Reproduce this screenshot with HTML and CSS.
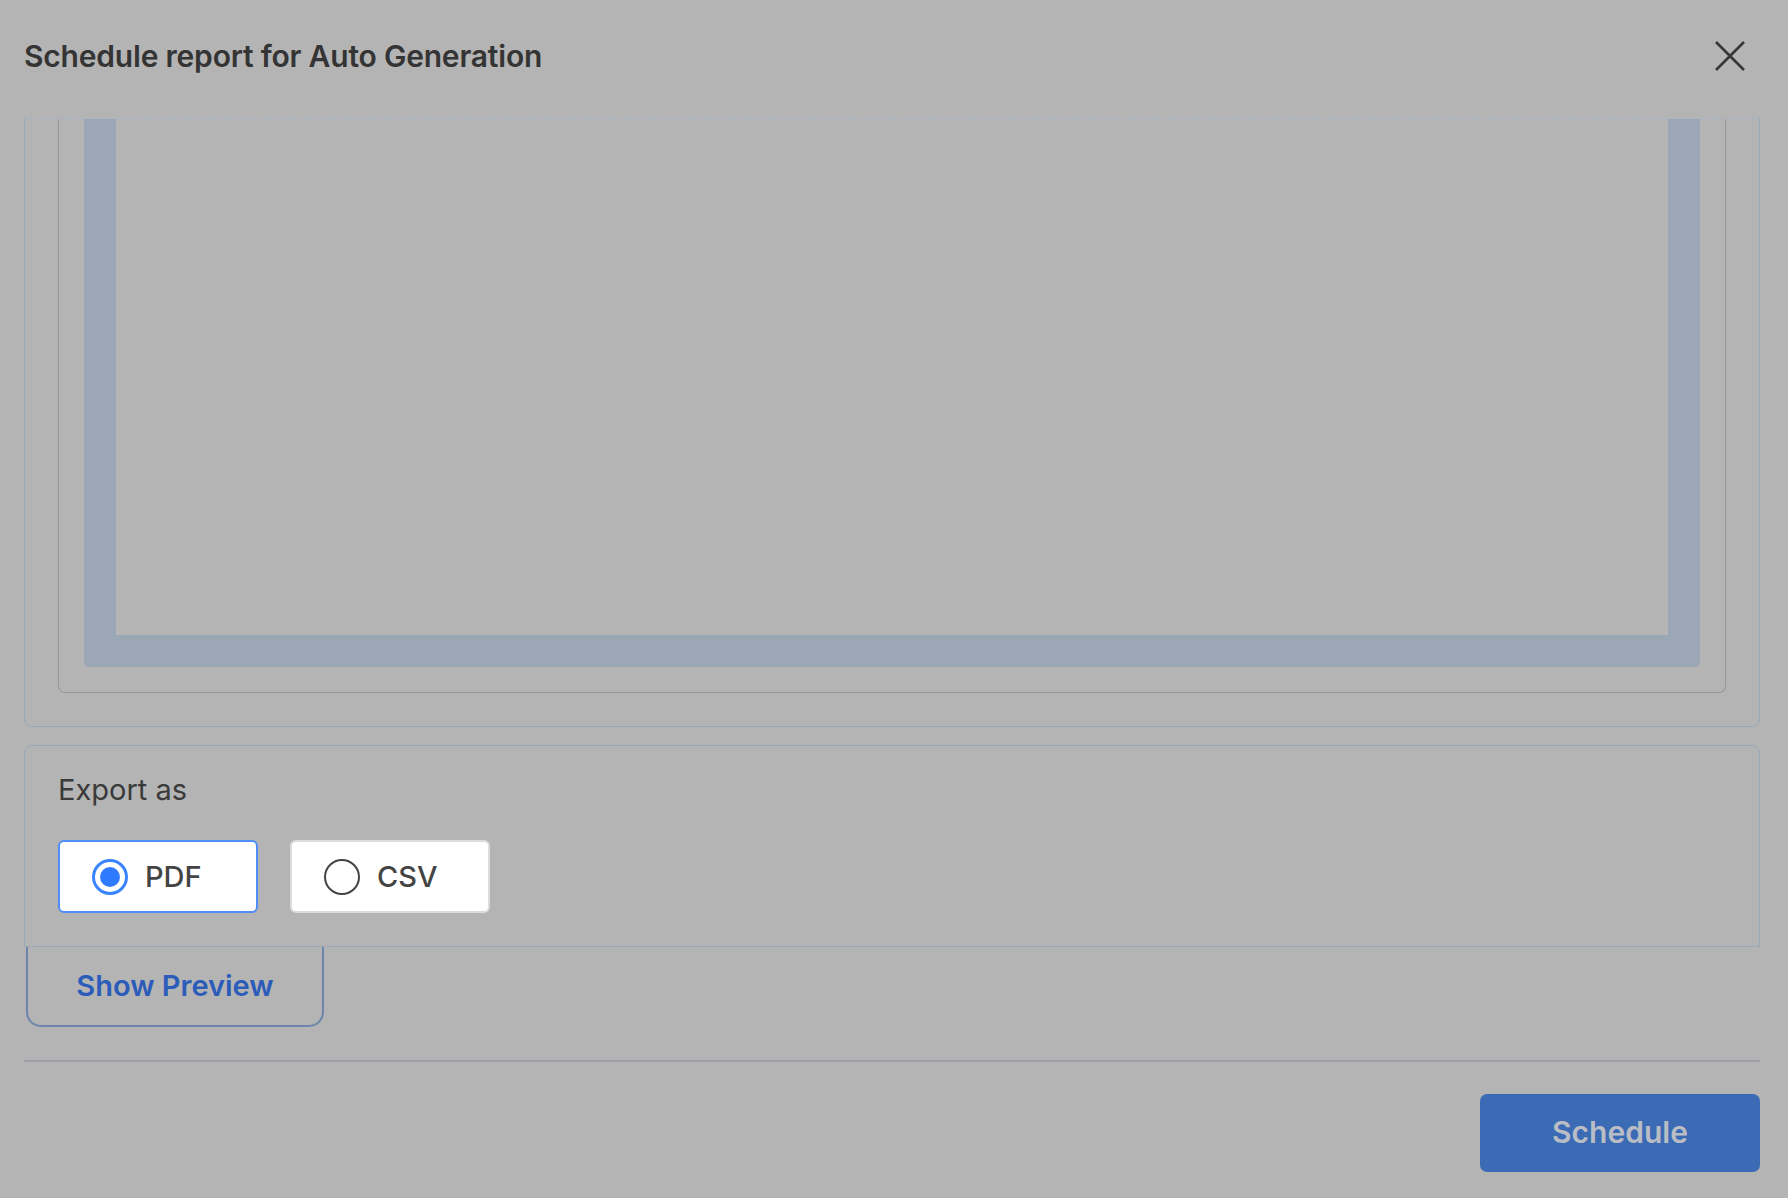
FILE: index.html
```html
<!DOCTYPE html>
<html lang="en">
  <head>
    <meta charset="UTF-8" />
    <meta name="viewport" content="width=device-width, initial-scale=1" />
    <title>Schedule report for Auto Generation</title>
    <link rel="stylesheet" href="styles.css">
  </head>
  <body>
    <div class="modal">
      <div class="modal-header">
        <h1 class="modal-title">Schedule report for Auto Generation</h1>
        <button class="close-btn" aria-label="Close">
          <svg viewBox="0 0 32 32" width="32" height="32">
            <path d="M2 2 L30 30 M30 2 L2 30" />
          </svg>
        </button>
      </div>

      <div class="preview-panel">
        <div class="preview-box">
          <div class="preview-frame"></div>
        </div>
      </div>

      <div class="export-panel">
        <div class="export-label">Export as</div>
        <div class="export-options">
          <label class="option selected">
            <span class="radio"></span>
            <span class="option-text">PDF</span>
          </label>
          <label class="option">
            <span class="radio"></span>
            <span class="option-text">CSV</span>
          </label>
        </div>
      </div>

      <button class="preview-btn">Show Preview</button>

      <div class="modal-footer">
        <button class="schedule-btn">Schedule</button>
      </div>
    </div>
  </body>
</html>
```

FILE: styles.css
```css
body {
  margin: 0;
  background: #b4b4b4;
  font-family: Inter, "Noto Sans", sans-serif;
  color: #333;
}
.modal {
  padding: 0 28px 0 24px;
}
.modal-header {
  height: 118px;
  box-sizing: border-box;
  padding-bottom: 7px;
  display: flex;
  align-items: center;
  justify-content: space-between;
}
.modal-title {
  margin: 0;
  font-size: 30px;
  font-weight: 600;
  color: #343434;
  letter-spacing: -0.2px;
}
.close-btn {
  background: none;
  border: none;
  padding: 0;
  margin-right: 14px;
  width: 32px;
  height: 32px;
  cursor: pointer;
}
.close-btn path {
  stroke: #363636;
  stroke-width: 2.6;
  fill: none;
}
.preview-panel {
  height: 609px;
  box-sizing: border-box;
  border: 1px solid #9ba8b9;
  border-top: 1px dashed #a6b6ca;
  border-radius: 0 0 8px 8px;
  padding: 0 33px 33px;
  display: flex;
  flex-direction: column;
}
.preview-box {
  flex: 1;
  border: 1px solid #999;
  border-top: none;
  border-radius: 0 0 7px 7px;
  padding: 0 25px 25px;
  display: flex;
  flex-direction: column;
}
.preview-frame {
  flex: 1;
  border: 32px solid #9ba7b5;
  border-top: none;
  border-radius: 0 0 6px 6px;
}
.export-panel {
  margin-top: 18px;
  height: 202px;
  box-sizing: border-box;
  border: 1px solid #9ba8b9;
  border-radius: 8px 8px 0 0;
  padding: 27px 33px 0;
}
.export-label {
  font-size: 29px;
  color: #3a3a3a;
  line-height: 34px;
}
.export-options {
  display: flex;
  gap: 32px;
  margin-top: 33px;
}
.option {
  width: 200px;
  height: 73px;
  box-sizing: border-box;
  background: #fff;
  border: 2px solid #dcdcdc;
  border-radius: 6px;
  display: flex;
  align-items: center;
  padding-left: 32px;
  gap: 17px;
}
.option.selected {
  border-color: #4f8ef7;
}
.radio {
  width: 36px;
  height: 36px;
  box-sizing: border-box;
  border: 2px solid #444;
  border-radius: 50%;
  display: flex;
  align-items: center;
  justify-content: center;
}
.selected .radio {
  border: 3px solid #3a84ff;
}
.selected .radio::after {
  content: "";
  width: 20px;
  height: 20px;
  border-radius: 50%;
  background: #2f7bff;
}
.option-text {
  font-size: 29px;
  color: #444;
  font-weight: 500;
}
.preview-btn {
  display: block;
  margin-left: 2px;
  width: 298px;
  height: 80px;
  background: none;
  border: 2px solid #6c86ad;
  border-top: none;
  border-radius: 0 0 15px 15px;
  font-family: Inter, "Noto Sans", sans-serif;
  font-size: 29px;
  font-weight: 600;
  color: #2b5cba;
  padding-top: 0;
  cursor: pointer;
}
.modal-footer {
  margin-top: 33px;
  border-top: 2px solid #9ea2a8;
  padding-top: 32px;
  display: flex;
  justify-content: flex-end;
}
.schedule-btn {
  width: 280px;
  height: 78px;
  border: none;
  border-radius: 7px;
  background: #3c6bb5;
  color: #b9bdc5;
  font-family: Inter, "Noto Sans", sans-serif;
  font-size: 30px;
  font-weight: 600;
  padding-bottom: 3px;
  cursor: pointer;
}
```
